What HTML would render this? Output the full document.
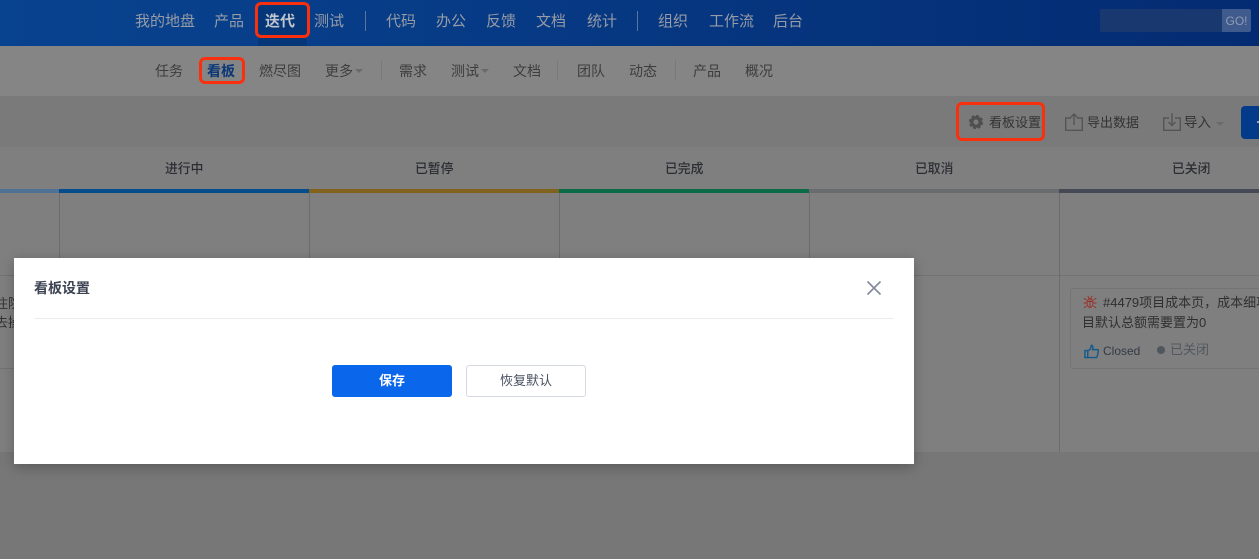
<!DOCTYPE html>
<html lang="zh">
<head>
<meta charset="utf-8">
<style>
html,body{margin:0;padding:0;width:1259px;height:559px;overflow:hidden;background:#777;}
body{position:relative;font-family:"Liberation Sans","Noto Sans CJK SC",sans-serif;}
.a{position:absolute;white-space:nowrap;}
.t{position:absolute;white-space:nowrap;line-height:20px;}
.n{font-size:15px;top:12px;color:#979ca6;}
.s{font-size:14px;color:#3d3d3d;top:61px;}
.h{font-size:12.8px;color:#2b2d33;top:159px;font-weight:500;}
.b{position:absolute;top:189px;height:4px;}
.v{position:absolute;top:193px;width:1px;height:259px;background:#6c6c6c;}
.r{position:absolute;border:3px solid #f9300d;border-radius:5px;box-sizing:border-box;}
.c{position:absolute;width:0;height:0;border-left:4px solid transparent;border-right:4px solid transparent;border-top:4px solid #6a6a6a;}
</style>
</head>
<body>
<!-- top header -->
<div class="a" style="left:0;top:0;width:1259px;height:46px;background:linear-gradient(90deg,#08438f 0%,#073a85 40%,#032b72 100%);"></div>
<div class="t n" style="left:135px;">我的地盘</div>
<div class="t n" style="left:214px;">产品</div>
<div class="a" style="left:258px;top:3px;width:49px;height:43px;background:#053678;"></div>
<div class="t n" style="left:265px;color:#c0c5ce;font-weight:bold;">迭代</div>
<div class="t n" style="left:314px;">测试</div>
<div class="a" style="left:365px;top:11px;width:1px;height:20px;background:#5f7597;"></div>
<div class="t n" style="left:386px;">代码</div>
<div class="t n" style="left:436px;">办公</div>
<div class="t n" style="left:486px;">反馈</div>
<div class="t n" style="left:536px;">文档</div>
<div class="t n" style="left:587px;">统计</div>
<div class="a" style="left:637px;top:11px;width:1px;height:20px;background:#5f7597;"></div>
<div class="t n" style="left:658px;">组织</div>
<div class="t n" style="left:709px;">工作流</div>
<div class="t n" style="left:773px;">后台</div>
<div class="a" style="left:1100px;top:9px;width:122px;height:23px;background:#1a3870;border-radius:2px 0 0 2px;"></div>
<div class="a" style="left:1222px;top:9px;width:29px;height:23px;background:#3f5a8c;border-radius:0 2px 2px 0;color:#8f9cb4;font-size:12px;line-height:24px;text-align:center;">GO!</div>

<!-- sub nav -->
<div class="a" style="left:0;top:46px;width:1259px;height:50px;background:#858585;"></div>
<div class="t s" style="left:155px;">任务</div>
<div class="t s" style="left:207px;color:#0a3778;font-weight:bold;">看板</div>
<div class="t s" style="left:259px;">燃尽图</div>
<div class="t s" style="left:325px;">更多</div>
<div class="c" style="left:355px;top:69px;"></div>
<div class="a" style="left:381px;top:60px;width:1px;height:20px;background:#797979;"></div>
<div class="t s" style="left:399px;">需求</div>
<div class="t s" style="left:451px;">测试</div>
<div class="c" style="left:481px;top:69px;"></div>
<div class="t s" style="left:513px;">文档</div>
<div class="a" style="left:557px;top:60px;width:1px;height:20px;background:#797979;"></div>
<div class="t s" style="left:577px;">团队</div>
<div class="t s" style="left:629px;">动态</div>
<div class="a" style="left:675px;top:60px;width:1px;height:20px;background:#797979;"></div>
<div class="t s" style="left:693px;">产品</div>
<div class="t s" style="left:745px;">概况</div>

<!-- toolbar -->
<div class="a" style="left:0;top:96px;width:1259px;height:51px;background:#7a7a7a;"></div>
<svg class="a" style="left:968px;top:114px;" width="16" height="16" viewBox="0 0 16 16"><circle cx="8" cy="8" r="4.2" fill="none" stroke="#4f4f4f" stroke-width="3.2"/><circle cx="8" cy="8" r="6.2" fill="none" stroke="#4f4f4f" stroke-width="1.8" stroke-dasharray="3 1.860"/></svg>
<div class="t" style="left:989px;top:113px;font-size:13px;color:#333;">看板设置</div>
<svg class="a" style="left:1065px;top:113px;" width="18" height="18" viewBox="0 0 18 18" fill="none" stroke="#555" stroke-width="1.4"><path d="M6 5H.7v12.300h16.600V5H12"/><path d="M9 12V1M5.800 4.200L9 1l3.200 3.200"/></svg>
<div class="t" style="left:1087px;top:113px;font-size:13px;color:#333;">导出数据</div>
<svg class="a" style="left:1163px;top:113px;" width="18" height="18" viewBox="0 0 18 18" fill="none" stroke="#555" stroke-width="1.4"><path d="M6 5H.7v12.300h16.600V5H12"/><path d="M9 0v12.500M5.500 9L9 12.500 12.500 9"/></svg>
<div class="t" style="left:1184px;top:113px;font-size:13.5px;color:#333;">导入</div>
<div class="c" style="left:1216px;top:122px;"></div>
<div class="a" style="left:1241px;top:106px;width:30px;height:33px;background:#033a8a;border-radius:4px;"></div>
<div class="a" style="left:1257px;top:121px;width:2px;height:2px;background:#8fa5c8;"></div>

<!-- board -->
<div class="a" style="left:0;top:147px;width:1259px;height:305px;background:#7f7f7f;"></div>
<div class="a" style="left:0;top:275px;width:1259px;height:1px;background:#727272;"></div>
<div class="a" style="left:0;top:368px;width:59px;height:1px;background:#727272;"></div>
<div class="b" style="left:0;width:59px;background:#4f7194;"></div>
<div class="b" style="left:59px;width:250px;background:#034d8c;"></div>
<div class="b" style="left:309px;width:250px;background:#80621c;"></div>
<div class="b" style="left:559px;width:250px;background:#0b6b47;"></div>
<div class="b" style="left:809px;width:250px;background:#696b6e;"></div>
<div class="b" style="left:1059px;width:200px;background:#444955;"></div>
<div class="v" style="left:59px;"></div>
<div class="v" style="left:309px;"></div>
<div class="v" style="left:559px;"></div>
<div class="v" style="left:809px;"></div>
<div class="v" style="left:1059px;"></div>
<div class="t h" style="left:165px;">进行中</div>
<div class="t h" style="left:415px;">已暂停</div>
<div class="t h" style="left:665px;">已完成</div>
<div class="t h" style="left:915px;">已取消</div>
<div class="t h" style="left:1172px;">已关闭</div>
<div class="t" style="left:-5px;top:294px;font-size:13px;color:#333;">住院</div>
<div class="t" style="left:-5px;top:313px;font-size:13px;color:#333;">去操</div>

<!-- card -->
<div class="a" style="left:1070px;top:288px;width:200px;height:81px;border:1px solid #747474;border-radius:3px;box-sizing:border-box;"></div>
<svg class="a" style="left:1083px;top:295px;" width="14" height="14" viewBox="0 0 14 14" fill="none" stroke="#9c2e25" stroke-width=".9"><ellipse cx="7" cy="8" rx="3" ry="4.500"/><path d="M4 6.500h6M7 3.500v9M4.800 .8L6 3.400M9.200 .8L8 3.400M.8 3l2.800 2.200M13.200 3l-2.800 2.200M.5 8h3.500M13.500 8H10M1 13l2.600-2.200M13 13l-2.600-2.200"/></svg>
<div class="t" style="left:1103px;top:293px;font-size:13px;color:#2f2f2f;">#4479项目成本页，成本细项</div>
<div class="t" style="left:1082px;top:313px;font-size:13px;color:#2f2f2f;">目默认总额需要置为0</div>
<svg class="a" style="left:1084px;top:344px;" width="15" height="15" viewBox="0 0 16 16" fill="none" stroke="#135a8c" stroke-width="1.500"><path d="M1 7h3v7.500H1zM4 7.500c2-1 3.500-3.500 3.800-6 1.500-.3 2 1.500 1.200 4.500h5.500c.8 0 1 .8.800 1.500l-1.300 6c-.2.700-.6 1-1.300 1H4"/></svg>
<div class="t" style="left:1103px;top:341px;font-size:12px;color:#333a44;">Closed</div>
<div class="a" style="left:1157px;top:346px;width:8px;height:8px;border-radius:50%;background:#50565e;"></div>
<div class="t" style="left:1170px;top:340px;font-size:13px;color:#52575f;">已关闭</div>

<!-- highlights -->
<div class="r" style="left:255px;top:2px;width:55px;height:36px;border-radius:6px;"></div>
<div class="r" style="left:199px;top:57px;width:46px;height:27px;border-radius:6px;"></div>
<div class="r" style="left:956px;top:102px;width:89px;height:39px;border-radius:6px;"></div>

<!-- dialog -->
<div class="a" style="left:14px;top:258px;width:900px;height:206px;background:#fff;box-shadow:0 3px 12px rgba(0,0,0,.25);"></div>
<div class="t" style="left:34px;top:278px;font-size:14px;font-weight:bold;color:#3c4353;">看板设置</div>
<div class="a" style="left:34px;top:318px;width:860px;height:1px;background:#ececec;"></div>
<svg class="a" style="left:865px;top:279px;" width="18" height="18" viewBox="0 0 18 18" fill="none" stroke="#838a9f" stroke-width="1.600"><path d="M2.500 2.500l13 13M15.500 2.500l-13 13"/></svg>
<div class="a" style="left:332px;top:365px;width:120px;height:32px;background:#0a66ea;border-radius:3px;color:#fff;font-size:13px;font-weight:bold;line-height:32px;text-align:center;">保存</div>
<div class="a" style="left:466px;top:365px;width:120px;height:32px;box-sizing:border-box;border:1px solid #d5d9e2;border-radius:3px;background:#fff;color:#4a5060;font-size:13px;line-height:30px;text-align:center;">恢复默认</div>
</body>
</html>
